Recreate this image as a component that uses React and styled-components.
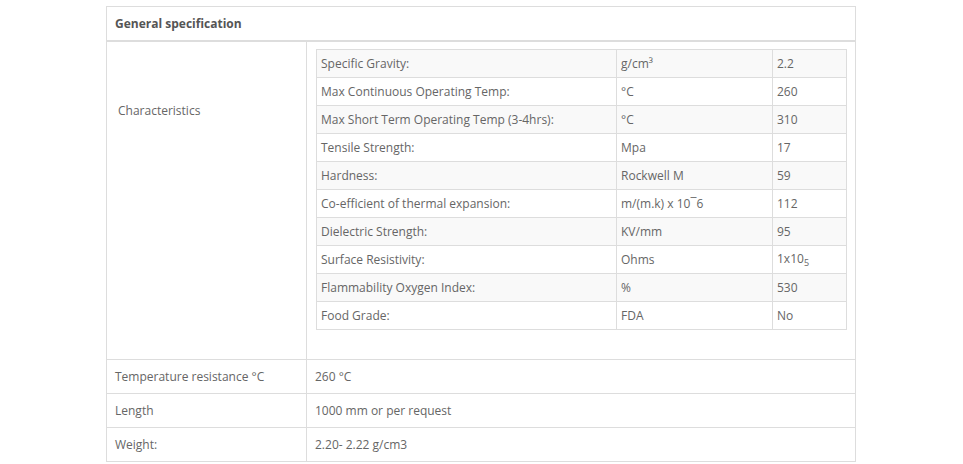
import React from "react";
import styled, { createGlobalStyle } from "styled-components";

const Global = createGlobalStyle`
  html, body { margin: 0; padding: 0; background: #fff; }
  body { font-family: "Open Sans", "Liberation Sans", Arial, sans-serif; }
`;

const Page = styled.div`
  padding: 6px 0 0 106px;
`;

const SpecTable = styled.table`
  width: 749px;
  border-collapse: collapse;
  border: 1px solid #ddd;
  font-size: 12px;
  color: #666;
  table-layout: fixed;
`;

const Col = styled.col`
  width: ${(p) => p.$w}px;
`;

const HeadCell = styled.th`
  text-align: left;
  font-weight: 700;
  color: #555;
  height: 34px;
  padding: 1px 8px 0;
  border-bottom: 2px solid #ddd;
  box-sizing: border-box;
`;

const Row = styled.tr`
  height: ${(p) => p.$h || 34}px;
`;

const LabelCell = styled.td`
  box-sizing: border-box;
  border: 1px solid #ddd;
  padding: ${(p) => (p.$top ? `${p.$top}px 8px 0 11px` : "1px 8px 0")};
  vertical-align: ${(p) => (p.$top ? "top" : "middle")};
`;

const ValueCell = styled.td`
  border: 1px solid #ddd;
  padding: ${(p) => (p.$nested ? "7px 8px 29px 9px" : "1px 8px 0")};
  vertical-align: ${(p) => (p.$nested ? "top" : "middle")};
`;

const Inner = styled.table`
  width: 530px;
  border-collapse: collapse;
  border: 1px solid #ddd;
  table-layout: fixed;
`;

const InnerRow = styled.tr`
  height: 28px;
  background: ${(p) => (p.$odd ? "#f9f9f9" : "#fff")};
`;

const InnerCell = styled.td`
  border: 1px solid #ddd;
  padding: 1px 4px 0;
  box-sizing: border-box;
  white-space: nowrap;
  overflow: hidden;
`;

const Sub = styled.sub`
  font-size: 9px;
`;

const props = [
  ["Specific Gravity:", "g/cm³", "2.2"],
  ["Max Continuous Operating Temp:", "°C", "260"],
  ["Max Short Term Operating Temp (3-4hrs):", "°C", "310"],
  ["Tensile Strength:", "Mpa", "17"],
  ["Hardness:", "Rockwell M", "59"],
  ["Co-efficient of thermal expansion:", "m/(m.k) x 10¯6", "112"],
  ["Dielectric Strength:", "KV/mm", "95"],
  ["Surface Resistivity:", "Ohms", <>1x10<Sub>5</Sub></>],
  ["Flammability Oxygen Index:", "%", "530"],
  ["Food Grade:", "FDA", "No"],
];

const rows = [
  ["Temperature resistance °C", "260 °C"],
  ["Length", "1000 mm or per request"],
  ["Weight:", "2.20- 2.22 g/cm3"],
];

export default function App() {
  return (
    <Page>
      <Global />
      <SpecTable>
        <colgroup>
          <Col $w={200} />
          <Col $w={549} />
        </colgroup>
        <thead>
          <tr>
            <HeadCell colSpan={2}>General specification</HeadCell>
          </tr>
        </thead>
        <tbody>
          <Row $h={318}>
            <LabelCell $top={60}>Characteristics</LabelCell>
            <ValueCell $nested>
              <Inner>
                <colgroup>
                  <Col $w={300} />
                  <Col $w={156} />
                  <Col $w={74} />
                </colgroup>
                <tbody>
                  {props.map((r, i) => (
                    <InnerRow key={i} $odd={i % 2 === 0}>
                      <InnerCell>{r[0]}</InnerCell>
                      <InnerCell>{r[1]}</InnerCell>
                      <InnerCell>{r[2]}</InnerCell>
                    </InnerRow>
                  ))}
                </tbody>
              </Inner>
            </ValueCell>
          </Row>
          {rows.map((r, i) => (
            <Row key={i}>
              <LabelCell>{r[0]}</LabelCell>
              <ValueCell>{r[1]}</ValueCell>
            </Row>
          ))}
        </tbody>
      </SpecTable>
    </Page>
  );
}
